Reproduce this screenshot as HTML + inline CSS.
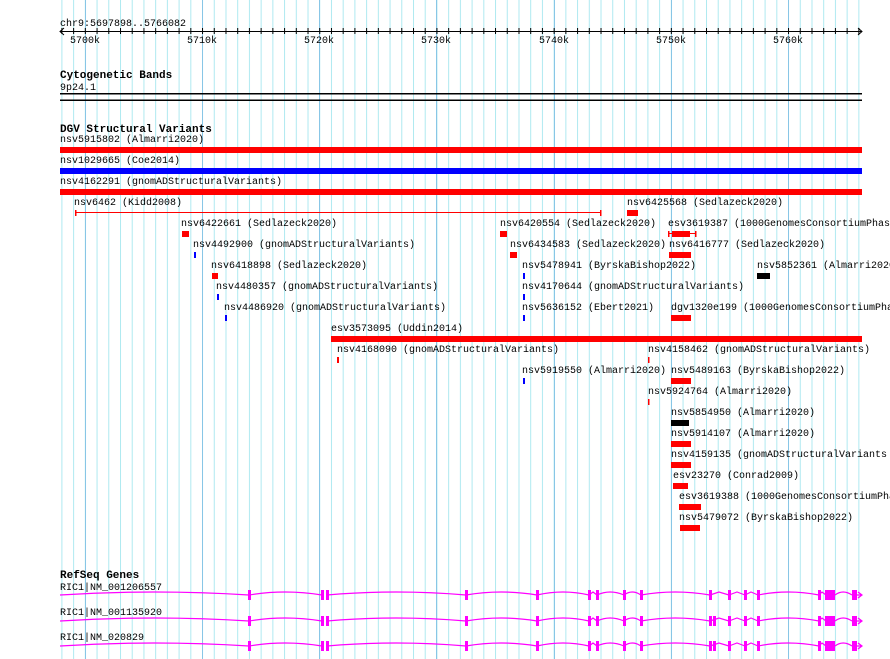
<!DOCTYPE html>
<html><head><meta charset="utf-8"><style>
html,body{margin:0;padding:0;background:#fff;width:890px;height:659px;overflow:hidden}
svg{display:block}
text{font-family:"Liberation Mono",monospace;font-size:10px;fill:#000}
.b{font-weight:bold;font-size:11px}
</style></head><body>
<svg width="890" height="659" viewBox="0 0 890 659" xmlns="http://www.w3.org/2000/svg">
<defs>
<pattern id="grid" x="61.4" y="0" width="11.72" height="659" patternUnits="userSpaceOnUse">
<rect x="0" y="0" width="1" height="659" fill="#aee9f0"/>
</pattern>
<pattern id="tick" x="61.4" y="0" width="11.72" height="659" patternUnits="userSpaceOnUse">
<rect x="0" y="0" width="1" height="659" fill="#000"/>
</pattern>
<g id="gene">
<path fill="none" stroke="#ff00ff" stroke-width="1.2" d="M60,0 Q154,-6 249,0 M249,0 Q285,-6 322,0 M327,0 Q396,-6 466,0 M466,0 Q501,-6 537,0 M537,0 Q563,-6 589,0 M589,0 L593,-3 L597,0 M597,0 Q610,-6 624,0 M624,0 Q632,-6 641,0 M641,0 Q675,-6 710,0 M710,0 L719,-3 L729,0 M729,0 L737,-3 L745,0 M745,0 L751,-3 L758,0 M758,0 Q788,-6 819,0 M819,0 L822,-3 L826,0 M835,0 Q843,-6 852,0 M857,0 L862,0 M858,-3 L862,0 L858,3"/>
<g fill="#ff00ff">
<rect x="248" y="-5" width="3" height="10"/><rect x="321" y="-5" width="3" height="10"/><rect x="326" y="-5" width="3" height="10"/>
<rect x="465" y="-5" width="3" height="10"/><rect x="536" y="-5" width="3" height="10"/><rect x="588" y="-5" width="3" height="10"/>
<rect x="596" y="-5" width="3" height="10"/><rect x="623" y="-5" width="3" height="10"/><rect x="640" y="-5" width="3" height="10"/>
<rect x="709" y="-5" width="3" height="10"/><rect x="728" y="-5" width="3" height="10"/><rect x="744" y="-5" width="3" height="10"/>
<rect x="757" y="-5" width="3" height="10"/><rect x="818" y="-5" width="3" height="10"/><rect x="825" y="-5" width="10" height="10"/>
<rect x="852" y="-5" width="5" height="10"/>
</g>
</g>
</defs>
<rect x="61" y="0" width="801" height="659" fill="url(#grid)"/>
<g fill="#88c6e6">
<rect x="85" y="0" width="1" height="659"/><rect x="202" y="0" width="1" height="659"/><rect x="319" y="0" width="1" height="659"/>
<rect x="436" y="0" width="1" height="659"/><rect x="554" y="0" width="1" height="659"/><rect x="671" y="0" width="1" height="659"/>
<rect x="788" y="0" width="1" height="659"/>
</g>
<!-- ruler -->
<text x="60" y="26">chr9:5697898..5766082</text>
<rect x="61" y="28" width="800" height="6" fill="url(#tick)"/>
<path d="M60,31.5 H862 M64,28 L60,31.5 L64,35 M858,28 L862,31.5 L858,35" stroke="#000" stroke-width="1" fill="none"/>
<text x="70" y="43">5700k</text><text x="187" y="43">5710k</text><text x="304" y="43">5720k</text>
<text x="421" y="43">5730k</text><text x="539" y="43">5740k</text><text x="656" y="43">5750k</text><text x="773" y="43">5760k</text>
<!-- cytobands -->
<text class="b" x="60" y="78">Cytogenetic Bands</text>
<text x="60" y="90">9p24.1</text>
<rect x="60" y="93" width="802" height="1.5" fill="#000"/>
<rect x="60" y="99.5" width="802" height="1.5" fill="#000"/>
<!-- DGV -->
<text class="b" x="60" y="132">DGV Structural Variants</text>
<g transform="translate(0,-1)">
<text x="60" y="143">nsv5915802 (Almarri2020)</text>
<text x="60" y="164">nsv1029665 (Coe2014)</text>
<text x="60" y="185">nsv4162291 (gnomADStructuralVariants)</text>
<text x="74" y="206">nsv6462 (Kidd2008)</text>
<text x="627" y="206">nsv6425568 (Sedlazeck2020)</text>
<text x="181" y="227">nsv6422661 (Sedlazeck2020)</text>
<text x="500" y="227">nsv6420554 (Sedlazeck2020)</text>
<text x="668" y="227">esv3619387 (1000GenomesConsortiumPhas</text>
<text x="193" y="248">nsv4492900 (gnomADStructuralVariants)</text>
<text x="510" y="248">nsv6434583 (Sedlazeck2020)</text>
<text x="669" y="248">nsv6416777 (Sedlazeck2020)</text>
<text x="211" y="269">nsv6418898 (Sedlazeck2020)</text>
<text x="522" y="269">nsv5478941 (ByrskaBishop2022)</text>
<text x="757" y="269">nsv5852361 (Almarri2020)</text>
<text x="216" y="290">nsv4480357 (gnomADStructuralVariants)</text>
<text x="522" y="290">nsv4170644 (gnomADStructuralVariants)</text>
<text x="224" y="311">nsv4486920 (gnomADStructuralVariants)</text>
<text x="522" y="311">nsv5636152 (Ebert2021)</text>
<text x="671" y="311">dgv1320e199 (1000GenomesConsortiumPha</text>
<text x="331" y="332">esv3573095 (Uddin2014)</text>
<text x="337" y="353">nsv4168090 (gnomADStructuralVariants)</text>
<text x="648" y="353">nsv4158462 (gnomADStructuralVariants)</text>
<text x="522" y="374">nsv5919550 (Almarri2020)</text>
<text x="671" y="374">nsv5489163 (ByrskaBishop2022)</text>
<text x="648" y="395">nsv5924764 (Almarri2020)</text>
<text x="671" y="416">nsv5854950 (Almarri2020)</text>
<text x="671" y="437">nsv5914107 (Almarri2020)</text>
<text x="671" y="458">nsv4159135 (gnomADStructuralVariants</text>
<text x="673" y="479">esv23270 (Conrad2009)</text>
<text x="679" y="500">esv3619388 (1000GenomesConsortiumPha</text>
<text x="679" y="521">nsv5479072 (ByrskaBishop2022)</text>
</g>
<g fill="#ff0000">
<rect x="60" y="147" width="802" height="6"/>
<rect x="60" y="189" width="802" height="6"/>
<rect x="75" y="212" width="526" height="1"/>
<rect x="75" y="210" width="1.5" height="6"/><rect x="600" y="210" width="1.5" height="6"/>
<rect x="627" y="210" width="11" height="6"/>
<rect x="182" y="231" width="7" height="6"/>
<rect x="500" y="231" width="7" height="6"/>
<rect x="668" y="233" width="28" height="1"/><rect x="668" y="231" width="1.5" height="6"/><rect x="695" y="231" width="1.5" height="6"/>
<rect x="672" y="231" width="18" height="6"/>
<rect x="510" y="252" width="7" height="6"/>
<rect x="669" y="252" width="22" height="6"/>
<rect x="212" y="273" width="6" height="6"/>
<rect x="671" y="315" width="20" height="6"/>
<rect x="331" y="336" width="531" height="6"/>
<rect x="337" y="357" width="2" height="6"/>
<rect x="648" y="357" width="1.5" height="6"/>
<rect x="671" y="378" width="20" height="6"/>
<rect x="648" y="399" width="1.5" height="6"/>
<rect x="671" y="441" width="20" height="6"/>
<rect x="671" y="462" width="20" height="6"/>
<rect x="673" y="483" width="15" height="6"/>
<rect x="679" y="504" width="22" height="6"/>
<rect x="680" y="525" width="20" height="6"/>
</g>
<g fill="#0000ff">
<rect x="60" y="168" width="802" height="6"/>
<rect x="194" y="252" width="2" height="6"/>
<rect x="523" y="273" width="2" height="6"/>
<rect x="217" y="294" width="2" height="6"/>
<rect x="523" y="294" width="2" height="6"/>
<rect x="225" y="315" width="2" height="6"/>
<rect x="523" y="315" width="2" height="6"/>
<rect x="523" y="378" width="2" height="6"/>
</g>
<g fill="#000">
<rect x="757" y="273" width="13" height="6"/>
<rect x="671" y="420" width="18" height="6"/>
</g>
<!-- RefSeq -->
<text class="b" x="60" y="578">RefSeq Genes</text>
<text x="60" y="590">RIC1|NM_001206557</text>
<text x="60" y="615">RIC1|NM_001135920</text>
<text x="60" y="640">RIC1|NM_020829</text>
<use href="#gene" transform="translate(0,595)"/>
<use href="#gene" transform="translate(0,621)"/>
<use href="#gene" transform="translate(0,646)"/>
<g fill="#ff00ff"><rect x="713" y="616" width="3" height="10"/><rect x="713" y="641" width="3" height="10"/></g>
</svg>
</body></html>
